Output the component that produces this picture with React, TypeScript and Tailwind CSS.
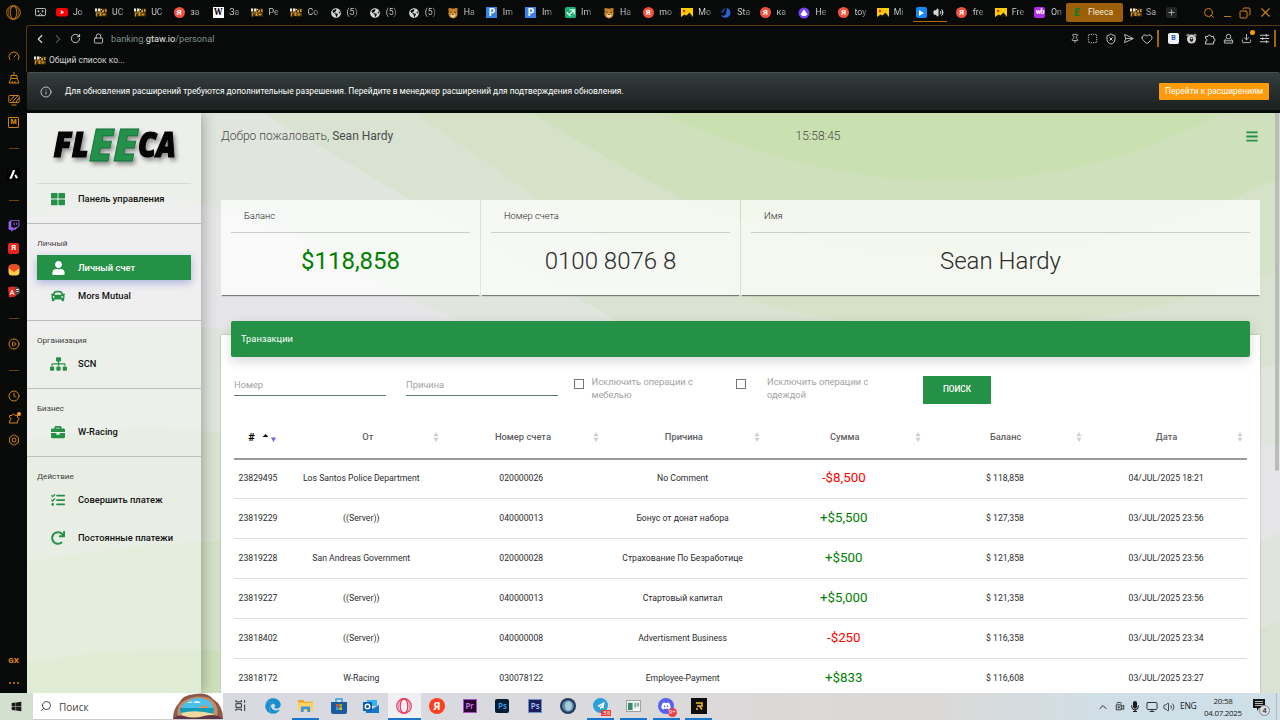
import type { ReactNode } from "react";
import {
  ChevronLeft,
  ChevronRight,
  ChevronUp,
  Clock,
  Copy,
  Download,
  Gauge,
  Heart,
  Hexagon,
  Info,
  Lock,
  Minus,
  Monitor,
  Pin,
  Plus,
  RotateCw,
  Search,
  SendHorizontal,
  ShieldX,
  SquareDashed,
  CirclePlay,
  Volume2,
  X,
} from "lucide-react";
import {
  FaBars,
  FaBriefcase,
  FaCar,
  FaDiscord,
  FaEdge,
  FaGlobeAmericas,
  FaMicrophone,
  FaRedo,
  FaSitemap,
  FaTasks,
  FaThLarge,
  FaTwitch,
  FaUser,
  FaWindows,
  FaPaperPlane,
} from "react-icons/fa";

/* ---------- small favicons ---------- */

function GtaIcon() {
  return (
    <svg viewBox="0 0 12 9" className="h-[9px] w-3 shrink-0">
      <rect y=".5" width="12" height="8" fill="#3a2a0c" />
      <path d="M0 .5h2v3H0zM3 .5h2.500v3H3z" fill="#e9e6dc" />
      <path d="M1 4.500h3v1H2v3H1zM4.500 4h2v4h-2zM7 2.500l2-1v3H7zM7.500 5.500H11l-1 2H7.500zM10 1h1.500v3H10z" fill="#cf921c" />
      <path d="M6 1h1v1H6z" fill="#f3e3b0" />
    </svg>
  );
}

function YandexIcon() {
  return (
    <span className="flex h-[11px] w-[11px] shrink-0 items-center justify-center rounded-full bg-[#f5503c] text-[8px] leading-none font-bold text-white">
      Я
    </span>
  );
}

function PictureIcon() {
  return (
    <svg viewBox="0 0 12 9" className="h-[9px] w-3 shrink-0">
      <rect width="12" height="9" fill="#fc0" />
      <circle cx="3" cy="3" r="1.2" fill="#e22" />
      <path d="M0 9l3.500-2.500L5.500 7.500l3-3L12 9z" fill="#111" />
    </svg>
  );
}

function BearIcon() {
  return (
    <svg viewBox="0 0 12 12" className="h-3 w-3 shrink-0">
      <circle cx="3" cy="2.500" r="1.800" fill="#b8761f" />
      <circle cx="9" cy="2.500" r="1.800" fill="#b8761f" />
      <ellipse cx="6" cy="6.500" rx="4.600" ry="5" fill="#c9872c" />
      <ellipse cx="6" cy="8.500" rx="2.300" ry="2" fill="#ead0a0" />
      <path d="M4 4.500v1.300M8 4.500v1.300M5.300 7.500h1.400" stroke="#3b1d05" strokeWidth="1" />
    </svg>
  );
}

function PuzzleIcon() {
  return (
    <svg viewBox="0 0 24 24" className="h-3 w-3" fill="none" stroke="currentColor" strokeWidth="2" strokeLinejoin="round">
      <path d="M3 7h5a3 3 0 1 1 6 0h5v4a3 3 0 1 1 0 6v5H3v-5a3 3 0 1 0 0-6z" />
    </svg>
  );
}

function Letter({ children, className }: { children: ReactNode; className: string }) {
  return (
    <span
      className={`flex h-[11px] w-[11px] shrink-0 items-center justify-center leading-none font-bold ${className}`}
    >
      {children}
    </span>
  );
}

const globe = <FaGlobeAmericas className="h-[10px] w-3 shrink-0 text-[#d4d8d8]" />;
const pixpic = <Letter className="bg-[#3b82e6] text-[10px] text-white">P</Letter>;

const tabs: { icon: ReactNode; label: string }[] = [
  {
    icon: (
      <svg viewBox="0 0 12 9" className="h-[9px] w-3 shrink-0">
        <rect width="12" height="8.500" rx="2.500" fill="#f00" />
        <path d="M4.800 2.200l3.400 2-3.400 2z" fill="#fff" />
      </svg>
    ),
    label: "Jo",
  },
  { icon: <GtaIcon />, label: "UC" },
  { icon: <GtaIcon />, label: "UC" },
  { icon: <YandexIcon />, label: "за" },
  { icon: <Letter className="bg-white font-serif text-[9px] text-black">W</Letter>, label: "За" },
  { icon: <GtaIcon />, label: "Ре" },
  { icon: <GtaIcon />, label: "Со" },
  { icon: globe, label: "(5)" },
  { icon: globe, label: "(5)" },
  { icon: globe, label: "(5)" },
  { icon: <BearIcon />, label: "Ha" },
  { icon: pixpic, label: "Im" },
  { icon: pixpic, label: "Im" },
  {
    icon: (
      <svg viewBox="0 0 12 12" className="h-[11px] w-[11px]">
        <rect width="12" height="12" rx="2" fill="#19b375" />
        <path d="M5 3h5v5M10 3L5 8M2 6l4 4" stroke="#fff" strokeWidth="1.300" fill="none" />
      </svg>
    ),
    label: "Im",
  },
  { icon: <BearIcon />, label: "Ha" },
  { icon: <YandexIcon />, label: "mo" },
  { icon: <PictureIcon />, label: "Mo" },
  {
    icon: (
      <svg viewBox="0 0 12 12" className="h-3 w-3 shrink-0">
        <path d="M7 1a5 5 0 1 1-6 7c2 1 4 1 5-1z" fill="#2a66d9" />
        <path d="M1 6a5 5 0 0 1 5-5L3 6z" fill="#17397c" />
      </svg>
    ),
    label: "Sta",
  },
  { icon: <YandexIcon />, label: "ка" },
  {
    icon: (
      <svg viewBox="0 0 12 12" className="h-3 w-3 shrink-0">
        <circle cx="6" cy="6" r="5.500" fill="#7443f5" />
        <path d="M6 3l3 4.500Q6 10 3 7.500z" fill="#fff" stroke="#fff" strokeLinejoin="round" />
      </svg>
    ),
    label: "Не",
  },
  { icon: <YandexIcon />, label: "toy" },
  { icon: <PictureIcon />, label: "Mi" },
];

function Tab({ icon, label }: { icon: ReactNode; label: string }) {
  return (
    <div className="flex w-[39.08px] shrink-0 items-center gap-[5px]">
      <span className="flex w-3 shrink-0 justify-center">{icon}</span>
      <span className="bg-gradient-to-r from-[#d5d9d9] from-50% to-[#6a6d6d] bg-clip-text text-[8.8px] whitespace-nowrap text-transparent">
        {label}
      </span>
    </div>
  );
}

function TabBar() {
  return (
    <div className="flex h-[25px] items-center pl-[35px]">
      <svg viewBox="0 0 12 10" className="mr-[10px] h-[9px] w-[11px] shrink-0" fill="none" stroke="#d4d8d8">
        <rect x=".5" y=".5" width="11" height="8" rx="1" />
        <path d="M3.500 8.500L6 6l2.500 2.500" />
        <circle cx="3.700" cy="3.700" r=".7" />
        <circle cx="8.300" cy="3.700" r=".7" />
      </svg>
      {tabs.map((t, i) => (
        <Tab key={i} {...t} />
      ))}
      <div className="ml-[-3px] flex h-[19px] w-[34px] shrink-0 items-center gap-[6px] border-b border-[#b06e12] pt-px pl-[3px]">
        <span className="flex h-[11px] w-[11px] items-center justify-center rounded-[2px] bg-[#1687fb]">
          <svg viewBox="0 0 6 6" className="h-[6px] w-[6px]">
            <path d="M1 0l5 3-5 3z" fill="#fff" />
          </svg>
        </span>
        <Volume2 className="h-[11px] w-[11px] fill-[#d4d8d8] text-[#d4d8d8]" />
      </div>
      <div className="ml-[9px] flex">
        <Tab icon={<YandexIcon />} label="fre" />
        <Tab icon={<PictureIcon />} label="Fre" />
        <Tab
          icon={
            <Letter className="rounded-[2px] bg-[#b12be8] text-[7px] tracking-[-0.5px] text-white">wb</Letter>
          }
          label="On"
        />
      </div>
      <div className="ml-[-7px] flex h-[19px] w-[57px] shrink-0 items-center rounded-[2px] bg-[#9c5f07] pl-[8px]">
        <span className="w-[14px] text-[10px] leading-none font-black text-[#087d2d] italic">E</span>
        <span className="text-[8.6px] text-[#f0eadf]">Fleeca</span>
      </div>
      <div className="ml-[7px] flex w-[29px] shrink-0 items-center gap-[4px]">
        <GtaIcon />
        <span className="text-[8.8px] text-[#a6a9a9]">Sa</span>
      </div>
      <div className="ml-[7px] flex h-[11px] w-[11px] shrink-0 items-center justify-center rounded-[2px] bg-[#232625]">
        <Plus className="h-[9px] w-[9px] text-[#c7caca]" />
      </div>
      <div className="ml-[26px] flex w-[70px] shrink-0 items-center justify-between text-[#d0820d]">
        <Search className="h-[12px] w-[12px]" />
        <Minus className="mt-2 h-[11px] w-[11px]" />
        <Copy className="h-[12px] w-[12px] -scale-x-100" />
        <X className="h-[15px] w-[15px]" strokeWidth={1.8} />
      </div>
    </div>
  );
}

function Toolbar() {
  return (
    <div className="flex h-[25px] shrink-0 items-center text-[#c4c8c7]">
      <ChevronLeft className="ml-[6px] h-[14px] w-[14px] text-[#d4d8d8]" />
      <ChevronRight className="ml-[4px] h-[14px] w-[14px] text-[#4b504f]" />
      <RotateCw className="ml-[5px] h-[11px] w-[11px] text-[#d4d8d8]" />
      <Lock className="ml-[12px] h-[11px] w-[11px]" />
      <span className="ml-[7px] text-[9.2px] text-[#7f908b]">
        banking.<span className="text-[#e2e5e4]">gtaw.io</span>/personal
      </span>
      <div className="ml-auto flex w-[83px] items-center justify-between">
        <Pin className="h-[11px] w-[10px]" />
        <SquareDashed className="h-[11px] w-[11px]" />
        <ShieldX className="h-[12px] w-[12px]" />
        <SendHorizontal className="h-[11px] w-[11px]" />
        <Heart className="h-[12px] w-[12px]" />
      </div>
      <div className="mr-[9px] ml-[4px] h-[17px] w-[2px] bg-[#a3660e]" />
      <div className="flex w-[102px] items-center justify-between">
        <Letter className="rounded-[2px] bg-[#eef1f6] text-[7px] text-[#2c5ca8]">B</Letter>
        <svg viewBox="0 0 12 12" className="h-[11px] w-[11px]">
          <circle cx="6" cy="6.500" r="5" fill="#cfcfcf" />
          <circle cx="2.200" cy="2.500" r="1.600" fill="#8e8e8e" />
          <circle cx="9.800" cy="2.500" r="1.600" fill="#8e8e8e" />
          <ellipse cx="6" cy="7" rx="1.800" ry="2.600" fill="#222" />
          <circle cx="6" cy="6" r=".9" fill="#fff" />
        </svg>
        <PuzzleIcon />
        <svg viewBox="0 0 12 12" className="h-[11px] w-[11px]" fill="none" stroke="currentColor">
          <circle cx="6" cy="4" r="2.500" />
          <path d="M3.500 6L1.500 8v3h9V8l-2-2M1.500 8.500h9" />
        </svg>
        <span className="relative">
          <Download className="h-[11px] w-[11px]" />
          <span className="absolute -top-[3px] -right-[3px] h-[5px] w-[5px] rounded-full bg-[#ff9b0a]" />
        </span>
        <svg viewBox="0 0 12 12" className="h-[11px] w-[11px]" fill="none" stroke="currentColor" strokeWidth="1.100">
          <path d="M1 2.500h10M1 6h10M1 9.500h10M8 1v3M4 4.500v3M8 8v3" />
        </svg>
      </div>
      <div className="mr-[4px] ml-[4px] h-[17px] w-[2px] bg-[#a3660e]" />
    </div>
  );
}

/* ---------- Opera GX side rail ---------- */

function RailDash() {
  return (
    <div className="flex h-[30px] shrink-0 items-center justify-center">
      <span className="h-px w-[10px] bg-[#6e430a]" />
    </div>
  );
}

function RailItem({ children }: { children: ReactNode }) {
  return (
    <div className="flex h-[22px] shrink-0 items-center justify-center text-[#d0820d] [&>svg]:h-3 [&>svg]:w-3">
      {children}
    </div>
  );
}

function SideRail() {
  return (
    <div className="flex w-[27px] shrink-0 flex-col pt-[20px]">
      <RailItem>
        <Gauge />
      </RailItem>
      <RailItem>
        <svg viewBox="0 0 12 12" fill="none" stroke="currentColor">
          <path d="M6 0v3M3 3.500h6v3H3zM3 6.500L1 11h10L9 6.500M4 11l.5-2M7 11V9" />
        </svg>
      </RailItem>
      <RailItem>
        <svg viewBox="0 0 12 12" fill="none" stroke="currentColor">
          <rect x=".8" y="1.500" width="10.400" height="7" rx=".8" />
          <path d="M2 7l4-5M4.500 8l5-6M8 8l3-4M3.500 11h5" />
        </svg>
      </RailItem>
      <RailItem>
        <span className="flex h-[11px] w-[11px] items-center justify-center rounded-[1px] border border-current text-[7px] leading-none font-black">
          M
        </span>
      </RailItem>
      <RailDash />
      <RailItem>
        <span className="flex h-[13px] w-[13px] items-center justify-center rounded-[2px] bg-black">
          <svg viewBox="0 0 12 12" className="h-[11px] w-[11px]">
            <path d="M5.500 1h2.200l-1 3.500L4 10.500H1.500zM7 6.500l1.800-.5L11 10H8.500z" fill="#fff" />
          </svg>
        </span>
      </RailItem>
      <RailDash />
      <RailItem>
        <FaTwitch className="text-[#9a63f0]" />
      </RailItem>
      <RailItem>
        <Letter className="rounded-[2px] bg-[#e5281f] text-[8px] text-white">Я</Letter>
      </RailItem>
      <RailItem>
        <svg viewBox="0 0 12 12">
          <rect x=".5" y=".5" width="11" height="11" rx="3.500" fill="#ffc94a" />
          <path d="M.5 4Q1 .5 4 .5h4q3 0 3.500 3.500L6 8z" fill="#ee4a24" />
        </svg>
      </RailItem>
      <RailItem>
        <svg viewBox="0 0 12 12">
          <circle cx="7.500" cy="5" r="4.500" fill="#4a4d50" />
          <path d="M0 1.500Q4 0 7 1l1 9q-4 2-7 1z" fill="#e32b22" />
          <path d="M2 9l2-5 2 5M2.700 7.500h2.600M8 3.500h3M8.500 5.500h2" stroke="#fff" strokeWidth=".9" fill="none" />
        </svg>
      </RailItem>
      <RailDash />
      <RailItem>
        <CirclePlay />
      </RailItem>
      <RailDash />
      <RailItem>
        <Clock />
      </RailItem>
      <RailItem>
        <span className="relative">
          <PuzzleIcon />
          <span className="absolute top-0 -right-px h-1 w-1 rounded-full bg-[#ff9b0a]" />
        </span>
      </RailItem>
      <RailItem>
        <svg viewBox="0 0 24 24" fill="none" stroke="currentColor" strokeWidth="2">
          <Hexagon />
          <circle cx="12" cy="12" r="4" />
        </svg>
      </RailItem>
      <div className="mt-auto -mb-px">
        <RailItem>
          <span className="text-[8px] font-black">GX</span>
        </RailItem>
        <RailItem>
          <span className="flex gap-[2px]">
            <i className="h-[2px] w-[2px] rounded-full bg-current" />
            <i className="h-[2px] w-[2px] rounded-full bg-current" />
            <i className="h-[2px] w-[2px] rounded-full bg-current" />
          </span>
        </RailItem>
      </div>
    </div>
  );
}

/* ---------- bank page ---------- */

function Backdrop() {
  return (
    <svg viewBox="27 113 1253 580" className="absolute inset-0 h-full w-full" preserveAspectRatio="none">
      <rect x="27" y="113" width="1253" height="580" fill="#e6e5e7" />
      <path d="M27 217Q120 200 207 206Q240 212 293 237L468 327Q870 545 1280 443V113H27z" fill="#e0e5dd" />
      <path d="M263 113L416 203L627 327Q930 475 1280 363V113z" fill="#dae3d2" />
      <path d="M415 113L545 203Q740 327 935 328Q1120 330 1280 270V113z" fill="#d5e2c8" />
      <path d="M531 113Q640 178 689 202Q830 255 945 255Q1110 255 1280 178V113z" fill="#cfe0bc" />
      <path d="M663 113Q805 181 950 181Q1095 181 1222 113z" fill="#c9e1b0" />
      <path d="M27 336Q120 323 215 328L1262 540L1280 533V693H27z" fill="#dfe5dc" />
      <path d="M27 440Q120 422 215 432L1262 628L1280 620V693H27z" fill="#dae3d3" />
      <path d="M27 563Q110 545 220 541V693H27z" fill="#d4e1c7" />
      <path d="M27 662Q120 646 220 650V693H27z" fill="#cee0bb" />
    </svg>
  );
}

function FleecaLogo() {
  return (
    <svg
      viewBox="50 120 132 50"
      className="ml-[23px] h-[50px] w-[132px] drop-shadow-[2px_3px_2px_rgba(0,0,0,0.4)]"
      fontFamily="'Open Sans', Roboto, sans-serif"
      fontWeight="800"
      fontStyle="italic"
    >
      <g fill="#050505" stroke="#050505" strokeWidth="1.200">
        <text x="53.500" y="156.500" fontSize="35" textLength="35" lengthAdjust="spacingAndGlyphs">
          FL
        </text>
        <text x="138" y="156.500" fontSize="35" textLength="38" lengthAdjust="spacingAndGlyphs">
          CA
        </text>
      </g>
      <text
        x="89"
        y="160.500"
        fontSize="45"
        textLength="48.500"
        lengthAdjust="spacingAndGlyphs"
        fill="#23914a"
        stroke="#14703a"
        strokeWidth=".9"
      >
        EE
      </text>
    </svg>
  );
}

function NavItem({ icon, label, active }: { icon: ReactNode; label: string; active?: boolean }) {
  return (
    <div
      className={`mx-[10px] flex h-[25px] items-center text-[9.33px] font-medium ${
        active
          ? "bg-[#249146] text-white shadow-[0_3px_8px_rgba(70,90,190,0.4)]"
          : "pb-px text-[#111] [&>span:first-child]:text-[#249146]"
      }`}
    >
      <span className="flex w-[41px] justify-center pl-px">{icon}</span>
      <span>{label}</span>
    </div>
  );
}

function NavLabel({ children }: { children: ReactNode }) {
  return <div className="ml-[10px] h-[12px] text-[8.1px] leading-[11px] text-[#3c3c3c]">{children}</div>;
}

function BankNav() {
  return (
    <nav className="relative flex w-[174px] shrink-0 flex-col bg-white/40 shadow-[3px_0_12px_rgba(0,0,0,0.25)]">
      <div className="pt-[7px]">
        <FleecaLogo />
      </div>
      <div className="mx-[10px] mt-[13px] h-px bg-[#d5d8d3]" />
      <div className="mt-[3px]">
        <NavItem icon={<FaThLarge className="h-[14px] w-[14px]" />} label="Панель управления" />
      </div>
      <div className="mt-[11px] h-px bg-[#bdbfbd]" />
      <div className="mt-[14px]">
        <NavLabel>Личный</NavLabel>
      </div>
      <div className="mt-[5px] flex flex-col gap-1">
        <NavItem active icon={<FaUser className="h-[14px] w-[13px]" />} label="Личный счет" />
        <NavItem icon={<FaCar className="h-[14px] w-[14px]" />} label="Mors Mutual" />
      </div>
      <div className="mt-[11px] h-px bg-[#bdbfbd]" />
      <div className="mt-[14px]">
        <NavLabel>Организация</NavLabel>
      </div>
      <div className="mt-[5px]">
        <NavItem icon={<FaSitemap className="h-[14px] w-[17px]" />} label="SCN" />
      </div>
      <div className="mt-[11px] h-px bg-[#bdbfbd]" />
      <div className="mt-[14px]">
        <NavLabel>Бизнес</NavLabel>
      </div>
      <div className="mt-[5px]">
        <NavItem icon={<FaBriefcase className="h-[14px] w-[14px]" />} label="W-Racing" />
      </div>
      <div className="mt-[11px] h-px bg-[#bdbfbd]" />
      <div className="mt-[14px]">
        <NavLabel>Действие</NavLabel>
      </div>
      <div className="mt-[5px] flex flex-col gap-[12.500px]">
        <NavItem icon={<FaTasks className="h-[14px] w-[14px]" />} label="Совершить платеж" />
        <NavItem icon={<FaRedo className="h-[14px] w-[14px]" />} label="Постоянные платежи" />
      </div>
    </nav>
  );
}

function StatCard({ title, children, className }: { title: string; children: ReactNode; className: string }) {
  return (
    <div className={`h-[95px] bg-white/75 px-[10px] shadow-[0_2px_1px_-1px_rgba(0,0,0,0.45)] ${className}`}>
      <div className="h-[33px] border-b border-[#cbcecb] pl-[13px] text-[9.33px] leading-[31px] font-light text-[#222]">
        {title}
      </div>
      <div className="text-center text-[24px] leading-[56px] font-light text-[#2b2b2b]">{children}</div>
    </div>
  );
}

const rows = [
  ["23829495", "Los Santos Police Department", "020000026", "No Comment", "-$8,500", "$ 118,858", "04/JUL/2025 18:21"],
  ["23819229", "((Server))", "040000013", "Бонус от донат набора", "+$5,500", "$ 127,358", "03/JUL/2025 23:56"],
  ["23819228", "San Andreas Government", "020000028", "Страхование По Безработице", "+$500", "$ 121,858", "03/JUL/2025 23:56"],
  ["23819227", "((Server))", "040000013", "Стартовый капитал", "+$5,000", "$ 121,358", "03/JUL/2025 23:56"],
  ["23818402", "((Server))", "040000008", "Advertisment Business", "-$250", "$ 116,358", "03/JUL/2025 23:34"],
  ["23818172", "W-Racing", "030078122", "Employee-Payment", "+$833", "$ 116,608", "03/JUL/2025 23:27"],
];

const headers = ["От", "Номер счета", "Причина", "Сумма", "Баланс", "Дата"];

function SortArrows() {
  return (
    <svg viewBox="0 0 6 10" className="absolute top-[17px] right-[4px] h-[10px] w-[6px]" fill="#d0d0d0">
      <path d="M3 0l2.500 4.300h-5zM3 10L.5 5.700h5z" />
    </svg>
  );
}

function Transactions() {
  return (
    <div className="mt-[40px] flex h-[380px] flex-col bg-white px-[13px] shadow-[0_0_2px_rgba(0,0,0,0.25)]">
      <div className="-mx-[3px] -mt-[14px] h-[36px] shrink-0 rounded-[2px] bg-[#249146] pl-[10px] text-[9.33px] leading-[36px] text-white shadow-[0_4px_12px_rgba(0,0,0,0.16)]">
        Транзакции
      </div>
      <div className="mt-[18px] flex h-[40px] shrink-0 items-start text-[9.33px] text-[#a2a2a2]">
        <div className="h-[21px] w-[152px] border-b border-[#5c7f6e] leading-[20px]">Номер</div>
        <div className="ml-[20px] h-[21px] w-[152px] border-b border-[#5c7f6e] leading-[20px]">Причина</div>
        <div className="mt-[4px] ml-[16px] h-[10px] w-[10px] border border-[#777]" />
        <div className="ml-[7.500px] w-[120px] leading-[13.300px]">Исключить операции с мебелью</div>
        <div className="mt-[4px] ml-[24.500px] h-[10px] w-[10px] border border-[#777]" />
        <div className="ml-[21px] w-[120px] leading-[13.300px]">Исключить операции с одеждой</div>
        <div className="mt-px ml-[36px] h-[28px] w-[68px] bg-[#249146] text-center text-[8.3px] leading-[27px] font-medium text-white">
          ПОИСК
        </div>
      </div>
      <div className="grid h-[45px] shrink-0 grid-cols-[48px_160.500px_repeat(5,160.900px)] text-center text-[9.33px] leading-[44px] font-medium text-[#606060]">
        <div className="flex items-center justify-center pl-[8px] text-[11px] font-bold text-black">
          #
          <svg viewBox="0 0 14 9" className="ml-[7px] h-[9px] w-[14px]">
            <path d="M3.500 1l3 3h-6z" fill="#111" />
            <path d="M9 4.500h5L11.500 9z" fill="#6c6ce0" />
          </svg>
        </div>
        {headers.map((h, i) => (
          <div key={h} className={`relative ${i === 0 ? "pl-[11px]" : ""}`}>
            {h}
            <SortArrows />
          </div>
        ))}
      </div>
      <div className="-mt-[2px] h-[2px] shrink-0 bg-[#9a9a9a]" />
      <div className="-mt-px flex flex-col">
        {rows.map((r) => (
          <div
            key={r[0]}
            className="grid h-[40px] shrink-0 grid-cols-[48px_158.500px_161.500px_repeat(4,161.200px)] border-b border-[#dedede] text-center text-[8.67px] leading-[39px] text-[#2b2b2b]"
          >
            {r.map((cell, i) =>
              i === 4 ? (
                <div
                  key={i}
                  className={`text-[13.33px] leading-[37px] ${cell.startsWith("-") ? "text-[#f00]" : "text-[#008000]"}`}
                >
                  {cell}
                </div>
              ) : (
                <div key={i} className="whitespace-nowrap">
                  {cell}
                </div>
              ),
            )}
          </div>
        ))}
      </div>
    </div>
  );
}

function BankPage() {
  return (
    <div className="relative flex h-[580px] overflow-hidden">
      <Backdrop />
      <BankNav />
      <div className="relative flex w-[1079px] flex-col px-[20px]">
        <div className="flex h-[47px] shrink-0 items-center pb-px text-[12px] font-light text-[#4a4a4a]">
          <span className="w-[574.500px]">
            Добро пожаловать, <span className="font-normal">Sean Hardy</span>
          </span>
          <span>15:58:45</span>
          <FaBars className="mr-[2px] ml-auto h-[13px] w-[12px] text-[#249146]" />
        </div>
        <div className="mt-[40px] flex gap-px">
          <StatCard title="Баланс" className="w-[259px]">
            <span className="font-normal text-[#008000]">$118,858</span>
          </StatCard>
          <StatCard title="Номер счета" className="w-[259px]">
            0100 8076 8
          </StatCard>
          <StatCard title="Имя" className="flex-1">
            Sean Hardy
          </StatCard>
        </div>
        <Transactions />
      </div>
      <div className="absolute top-0 right-px h-[358px] w-[4px] rounded-b-sm bg-[#b9bcb8]" />
    </div>
  );
}

/* ---------- taskbar ---------- */

function TaskApp({ children, open, active }: { children: ReactNode; open?: boolean; active?: boolean }) {
  return (
    <div className={`flex w-[32.750px] shrink-0 justify-center ${active ? "bg-white/60" : ""}`}>
      <div
        className={`relative flex h-[27px] items-center justify-center border-b-2 ${active ? "w-full" : "w-[27px]"} ${
          open ? "border-[#1a75cc]" : "border-transparent"
        }`}
      >
        {children}
      </div>
    </div>
  );
}

function BeachArt() {
  return (
    <svg viewBox="0 0 50 26" className="h-[26px] w-[50px]">
      <path d="M0 26Q0 16 6 10Q9 2 22 1Q34 -1 40 6Q50 12 50 26z" fill="#8d5a49" />
      <path d="M5 24Q2 12 13 7Q24 1 36 5Q47 12 44 24z" fill="#c58c68" />
      <path d="M8 21Q6 12 15 8Q25 2 36 8Q42 12 40 21z" fill="#4cc0ea" />
      <path d="M14 10q3-3 6 0 4-4 8 0z" fill="#e5f7ff" />
      <path d="M7 15h34l-1 6H8z" fill="#149bb5" />
      <path d="M8 20q15-4 33 1l-3 4H11z" fill="#f0d9a0" />
      <path d="M25 15l8-3 2 3z" fill="#f28b3c" />
      <path d="M0 26q5-5 11-3 9 3 20 0 12-3 19 3z" fill="#5f3548" />
    </svg>
  );
}

function Taskbar() {
  return (
    <div className="flex h-[27px] shrink-0 items-stretch bg-gradient-to-r from-[#d3dfcf] via-[#dcd9d6] to-[#dadcdf] font-['Open_Sans','Noto_Sans',sans-serif] text-[#1a1a1a]">
      <div className="flex w-[33px] items-center justify-center">
        <FaWindows className="h-[11px] w-[11px]" />
      </div>
      <div className="flex w-[190px] items-center border-b border-[#ccc] bg-white">
        <Search className="ml-[7px] h-[12px] w-[12px] -scale-x-100" strokeWidth={1.6} />
        <span className="mt-[2px] ml-[7px] text-[10px] text-[#444]">Поиск</span>
        <span className="ml-auto self-end">
          <BeachArt />
        </span>
      </div>
      <div className="flex flex-1 bg-gradient-to-r from-[#d9dadf] from-20% via-[#dcd8d5] via-65% to-[#cfdfe8] to-85% pl-px">
        <TaskApp>
          <svg viewBox="0 0 12 12" className="h-[11px] w-[11px]" fill="none" stroke="#222">
            <path d="M1 0v2h6V0M1 12v-2h6v2M1 4h6v4H1zM10.500 0v3M10.500 5v7" />
          </svg>
        </TaskApp>
        <TaskApp>
          <FaEdge className="h-[16px] w-[16px] text-[#178fcf]" />
        </TaskApp>
        <TaskApp open>
          <svg viewBox="0 0 16 14" className="h-[13px] w-[15px]">
            <path d="M0 1h6l1 2h9v10H0z" fill="#e9a925" />
            <path d="M0 4h16v9H0z" fill="#fcd462" />
            <path d="M3 8h10v6h-3v-3H6v3H3z" fill="#3c93e0" />
          </svg>
        </TaskApp>
        <TaskApp>
          <svg viewBox="0 0 16 16" className="h-[16px] w-[16px]">
            <path d="M5 4V1h6v3" fill="none" stroke="#2ea4e8" strokeWidth="1.500" />
            <path d="M0 4h16v10q0 2-2 2H2q-2 0-2-2z" fill="#1b5a9c" />
            <path d="M5 6h2.700v2.700H5z" fill="#f1502f" />
            <path d="M8.300 6H11v2.700H8.300z" fill="#80bb1c" />
            <path d="M5 9.300h2.700V12H5z" fill="#27a8ee" />
            <path d="M8.300 9.300H11V12H8.300z" fill="#fdb916" />
          </svg>
        </TaskApp>
        <TaskApp>
          <svg viewBox="0 0 16 16" className="h-[16px] w-[16px]">
            <path d="M4 2h10v6H4z" fill="#35b3ef" />
            <path d="M3 8l6 3 7-4v8H3z" fill="#1676cc" />
            <rect y="4" width="9" height="9" rx="1" fill="#0a5aa8" />
            <circle cx="4.500" cy="8.500" r="2.300" fill="none" stroke="#fff" strokeWidth="1.400" />
          </svg>
        </TaskApp>
        <TaskApp open active>
          <svg viewBox="0 0 16 16" className="h-[16px] w-[16px]" fill="none" stroke="#e8365d" strokeWidth="1.200">
            <circle cx="8" cy="8" r="7.300" />
            <ellipse cx="8" cy="8" rx="3.800" ry="7" />
            <ellipse cx="8" cy="8" rx="5.500" ry="7.200" strokeWidth=".6" />
          </svg>
        </TaskApp>
        <TaskApp>
          <span className="flex h-4 w-4 items-center justify-center rounded-full bg-[#fc3f1d] text-[11px] leading-none font-bold text-white">
            Я
          </span>
        </TaskApp>
        <TaskApp>
          <span className="flex h-[14px] w-[14px] items-center justify-center border border-[#a44fc4] bg-[#2a0634] text-[8px] font-semibold text-[#dc83f2]">
            Pr
          </span>
        </TaskApp>
        <TaskApp>
          <span className="flex h-[14px] w-[14px] items-center justify-center rounded-[2px] bg-[#001d34] text-[8px] font-semibold text-[#35a6f8]">
            Ps
          </span>
        </TaskApp>
        <TaskApp>
          <span className="flex h-[14px] w-[14px] items-center justify-center border border-[#6d92c4] bg-[#1d1c5c] text-[8px] font-semibold text-[#a9cdf7]">
            Ps
          </span>
        </TaskApp>
        <TaskApp>
          <svg viewBox="0 0 16 16" className="h-4 w-4">
            <circle cx="8" cy="8" r="8" fill="#26395e" />
            <circle cx="8" cy="8" r="5.800" fill="#5793b4" />
            <ellipse cx="8.500" cy="8" rx="3.500" ry="4.800" fill="#a9c9d5" />
          </svg>
        </TaskApp>
        <TaskApp open>
          <span className="flex h-[15px] w-[15px] items-center justify-center rounded-full bg-[#2aa1da]">
            <FaPaperPlane className="h-[7px] w-[8px] text-white" />
          </span>
          <span className="absolute right-[3px] bottom-[2px] bg-[#e93a32] px-px text-[6px] leading-[6px] text-white">
            .58
          </span>
        </TaskApp>
        <TaskApp open>
          <svg viewBox="0 0 16 13" className="h-[12px] w-[15px]">
            <rect x=".5" y=".5" width="15" height="12" fill="#f5f7f7" stroke="#959b9b" />
            <path d="M2 3h5v8H2z" fill="#3c8a6d" />
            <path d="M9 3h2v5H9zM12 3h2v4h-2z" fill="#7aa6a0" />
          </svg>
        </TaskApp>
        <TaskApp open>
          <span className="flex h-4 w-4 items-center justify-center rounded-full bg-[#5562ee]">
            <FaDiscord className="h-[10px] w-[10px] text-white" />
          </span>
          <span className="absolute right-[3px] bottom-[1px] rounded-full bg-[#e5404c] px-px text-[6px] leading-[9px] text-white">
            9+
          </span>
        </TaskApp>
        <TaskApp open>
          <span className="flex h-[16px] w-[16px] items-center justify-center bg-[#0d0d0d]">
            <svg viewBox="0 0 8 8" className="h-2 w-2" fill="none" stroke="#f2bc12" strokeWidth="1.500">
              <path d="M1 1h6v3H2M4.500 4L7 7.500M1 7h2" />
            </svg>
          </span>
        </TaskApp>
        <div className="mr-[3px] ml-auto flex items-center">
          <ChevronUp className="h-[12px] w-[12px]" strokeWidth={1.8} />
          <svg viewBox="0 0 12 12" className="ml-[6px] h-[11px] w-[10px]" fill="none" stroke="currentColor">
            <path d="M1.500 4h6v6h-6zM7.500 6L10.500 4.500v5L7.500 8M2 2q3-2 6 0" />
            <circle cx="4.500" cy="7" r="1" />
          </svg>
          <FaMicrophone className="ml-[6px] h-[11px] w-[8px]" />
          <Monitor className="ml-[7px] h-[12px] w-[12px]" strokeWidth={1.7} />
          <Volume2 className="ml-[5px] h-[12px] w-[12px]" strokeWidth={1.5} />
          <span className="ml-[5px] w-[16px] text-[8.5px] tracking-[-0.3px]">ENG</span>
          <div className="ml-[8px] w-[38px] text-center text-[8px] leading-[12px] tracking-[-0.3px]">
            <div>20:58</div>
            <div>04.07.2025</div>
          </div>
          <div className="relative ml-[11px] h-[16px] w-[16px]">
            <svg viewBox="0 0 12 12" className="h-[12px] w-[12px]">
              <path d="M0 0h12v9H6l-2 3V9H0z" fill="#161616" />
              <path d="M2 2.500h8M2 4.500h8M2 6.500h8" stroke="#ddd" strokeWidth=".8" />
            </svg>
            <span className="absolute -right-px -bottom-px flex h-[11px] w-[11px] items-center justify-center rounded-full border border-[#888] bg-[#d9dcdf] text-[7px] leading-none font-semibold">
              4
            </span>
          </div>
          <div className="ml-[7px] h-[27px] w-px bg-[#b5b8ba]" />
        </div>
      </div>
    </div>
  );
}

export default function App() {
  return (
    <div className="flex h-[720px] w-[1280px] flex-col overflow-hidden bg-[#080a09] font-[Roboto,'Liberation_Sans',sans-serif]">
      <div className="relative h-[25px] shrink-0">
        <svg
          viewBox="0 0 16 16"
          className="absolute top-[5px] left-[6px] h-[15px] w-[15px]"
          fill="none"
          stroke="#c97e0c"
        >
          <circle cx="8" cy="8" r="7.300" />
          <ellipse cx="8" cy="8" rx="3.500" ry="6.800" />
          <ellipse cx="8" cy="8" rx="5.500" ry="7.200" strokeWidth=".6" />
        </svg>
        <TabBar />
      </div>
      <div className="flex h-[668px] shrink-0">
        <SideRail />
        <div className="flex min-w-0 flex-1 flex-col">
          <div className="-ml-px flex h-[47px] shrink-0 flex-col rounded-tl-[3px] border-t border-l border-[#5a360a]">
            <Toolbar />
            <div className="flex h-[18px] items-center pl-[7px]">
              <GtaIcon />
              <span className="ml-[3px] text-[8.5px] text-[#d4d8d8]">Общий список ко...</span>
            </div>
          </div>
          <div className="flex h-[38px] shrink-0 items-center rounded-t-[2px] border-t border-[#475250] bg-gradient-to-b from-[#343e3c] to-[#1b2020] pr-[11px] pl-[13px]">
            <Info className="h-[12px] w-[12px] text-[#d4d8d8]" strokeWidth={1.7} />
            <span className="ml-[13px] text-[8.4px] text-white">
              Для обновления расширений требуются дополнительные разрешения. Перейдите в менеджер расширений для
              подтверждения обновления.
            </span>
            <span className="ml-auto flex h-[17px] w-[110px] items-center justify-center rounded-[1px] bg-[#ff9b0a] text-[8.5px] whitespace-nowrap text-white">
              Перейти к расширениям
            </span>
          </div>
          <div className="h-[3px] shrink-0" />
          <BankPage />
        </div>
      </div>
      <Taskbar />
    </div>
  );
}
